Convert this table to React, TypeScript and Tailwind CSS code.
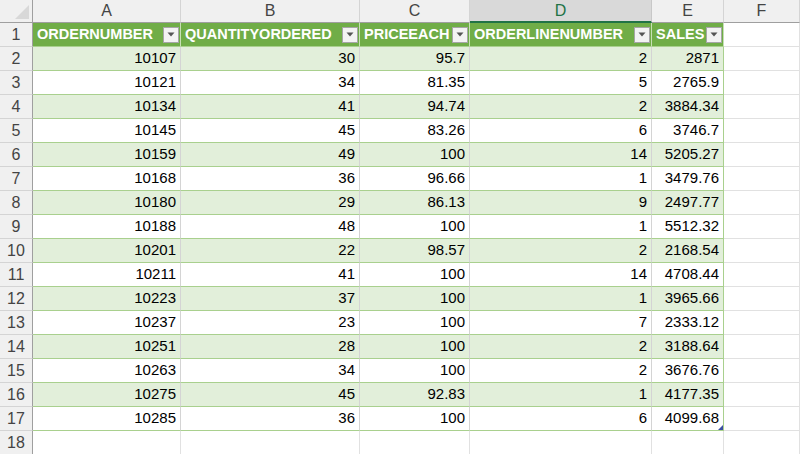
const rows = [
  [10107, 30, "95.7", 2, "2871"],
  [10121, 34, "81.35", 5, "2765.9"],
  [10134, 41, "94.74", 2, "3884.34"],
  [10145, 45, "83.26", 6, "3746.7"],
  [10159, 49, "100", 14, "5205.27"],
  [10168, 36, "96.66", 1, "3479.76"],
  [10180, 29, "86.13", 9, "2497.77"],
  [10188, 48, "100", 1, "5512.32"],
  [10201, 22, "98.57", 2, "2168.54"],
  [10211, 41, "100", 14, "4708.44"],
  [10223, 37, "100", 1, "3965.66"],
  [10237, 23, "100", 7, "2333.12"],
  [10251, 28, "100", 2, "3188.64"],
  [10263, 34, "100", 2, "3676.76"],
  [10275, 45, "92.83", 1, "4177.35"],
  [10285, 36, "100", 6, "4099.68"],
]

const headers = ["ORDERNUMBER", "QUANTITYORDERED", "PRICEEACH", "ORDERLINENUMBER", "SALES"]
const letters = ["A", "B", "C", "D", "E", "F"]
const widths = ["w-[148px]", "w-[179px]", "w-[110px]", "w-[182px]", "w-[72px]"]

const FilterButton = () => (
  <span className="ml-auto mr-[1px] flex h-[16px] w-[16px] shrink-0 items-center justify-center border border-[#a6a6a6] bg-[#f3f3f3]">
    <svg width="8" height="5" viewBox="0 0 8 5">
      <path d="M0.5 0.5 L7.5 0.5 L4 4.5 Z" fill="#555555" />
    </svg>
  </span>
)

const RowHead = ({ n }: { n: number }) => (
  <div className="flex h-full w-[33px] shrink-0 items-center justify-center border-r border-b border-r-[#9f9f9f] border-b-[#d4d4d4] bg-[#f0f0f0] text-[16px] text-[#444444]">
    {n}
  </div>
)

export default function App() {
  return (
    <div
      className="h-[454px] w-[800px] overflow-hidden bg-white text-[15px] text-black"
      style={{ fontFamily: '"Liberation Sans", Arial, sans-serif' }}
    >
      {/* column letters */}
      <div className="flex h-[23px] text-[16px]">
        <div className="flex w-[33px] shrink-0 items-end justify-end border-r border-b border-[#9f9f9f] bg-[#f0f0f0] p-[3px]">
          <svg width="14" height="14" viewBox="0 0 14 14">
            <path d="M14 0 L14 14 L0 14 Z" fill="#d8d8d8" />
          </svg>
        </div>
        {letters.map((l, i) =>
          i === 3 ? (
            <div
              key={l}
              className={`${widths[i]} flex shrink-0 items-center justify-center border-r border-b-2 border-r-[#c8c8c8] border-b-[#217346] bg-[#d9d9d9] text-[#217346]`}
            >
              {l}
            </div>
          ) : (
            <div
              key={l}
              className={`${i < 5 ? widths[i] : "w-[76px]"} flex shrink-0 items-center justify-center border-r border-b border-r-[#d4d4d4] border-b-[#9f9f9f] bg-[#f0f0f0] text-[#444444]`}
            >
              {l}
            </div>
          )
        )}
        <div className="flex-1 border-b border-[#9f9f9f] bg-[#f0f0f0]" />
      </div>

      {/* table header row */}
      <div className="flex h-[24px]">
        <RowHead n={1} />
        {headers.map((h, i) => (
          <div
            key={h}
            className={`${widths[i]} flex shrink-0 items-center border-r border-b border-r-[#c6e0b4] border-b-[#a9d08e] bg-[#70ad47] pl-[4px] text-[14.5px] font-bold text-white`}
          >
            <span>{h}</span>
            <FilterButton />
          </div>
        ))}
        <div className="w-[76px] shrink-0 border-r border-b border-[#e1e1e1]" />
      </div>

      {rows.map((r, ri) => {
        const band = ri % 2 === 0 ? "bg-[#e2efda]" : "bg-white"
        return (
          <div key={ri} className="flex h-[24px]">
            <RowHead n={ri + 2} />
            {r.map((v, ci) => (
              <div
                key={ci}
                className={`${widths[ci]} ${band} relative flex shrink-0 items-center justify-end border-r border-b border-b-[#a9d08e] pr-[4px] ${
                  ci === 4 ? "border-r-[#a9d08e]" : "border-r-[#d4d4d4]"
                }`}
              >
                {v}
                {ci === 4 && ri === rows.length - 1 && (
                  <svg className="absolute right-0 bottom-0" width="5" height="5" viewBox="0 0 5 5">
                    <path d="M5 0 L5 5 L0 5 Z" fill="#3b4fa3" />
                  </svg>
                )}
              </div>
            ))}
            <div className="w-[76px] shrink-0 border-r border-b border-[#e1e1e1]" />
          </div>
        )
      })}

      {/* empty row 18 */}
      <div className="flex h-[24px]">
        <RowHead n={18} />
        {widths.map((w, i) => (
          <div key={i} className={`${w} shrink-0 border-r border-b border-[#e1e1e1]`} />
        ))}
        <div className="w-[76px] shrink-0 border-r border-b border-[#e1e1e1]" />
      </div>
    </div>
  )
}
